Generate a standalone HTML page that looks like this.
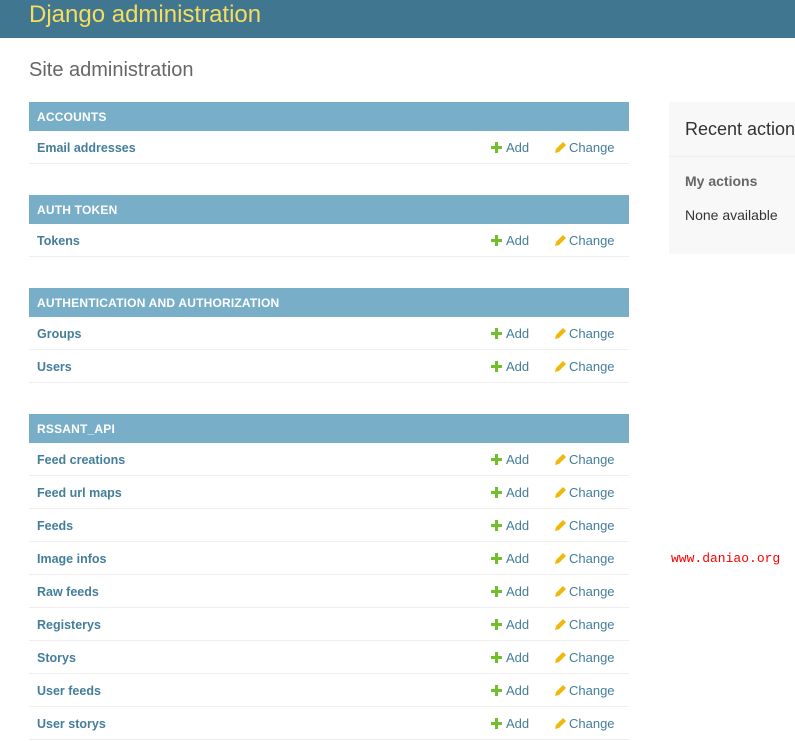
<!DOCTYPE html>
<html><head><meta charset="utf-8"><style>
*{margin:0;padding:0;box-sizing:border-box}
body{width:795px;height:719px;overflow:hidden;background:#fff;font-family:"Liberation Sans",Arial,sans-serif;position:relative;color:#333}
#hd{height:38px;background:#417690;padding-left:29px}
#hd h1{color:#f5dd5d;font-weight:normal;font-size:24px;line-height:30px}
h2.t{position:absolute;left:29px;top:59px;font-size:20px;font-weight:normal;color:#666}
.m{position:absolute;left:29px;width:600px}
.cap{height:29px;background:#79aec8;color:#fff;font-weight:bold;font-size:12px;line-height:30px;padding-left:8px;letter-spacing:.2px}
.r{height:33px;border-bottom:1px solid #eee;position:relative;font-size:13px;line-height:34px;color:#447e9b}
.r b{position:absolute;left:8px;font-size:12.5px}
.a{position:absolute;left:462px}
.c{position:absolute;left:525px}
.a svg,.c svg{position:absolute;top:11px}
.a span,.c span{position:absolute;left:15px;white-space:nowrap}
#ra{position:absolute;left:669px;top:102px;width:140px;height:152px;background:#f8f8f8}
#ra h2{font-size:18px;font-weight:normal;color:#333;position:absolute;left:16px;top:17px;white-space:nowrap}
#ra .ln{position:absolute;top:54px;left:0;right:0;border-top:1px solid #eee}
#ra h3{position:absolute;left:16px;top:71px;font-size:14px;color:#666}
#ra p{position:absolute;left:16px;top:105px;font-size:14px;color:#333;white-space:nowrap}
#wm{position:absolute;left:671px;top:551px;font-family:"Liberation Mono",monospace;font-size:13px;color:#f00}
</style></head><body>
<div id="hd"><h1>Django administration</h1></div>
<h2 class="t">Site administration</h2>

<div class="m" style="top:102px"><div class="cap">ACCOUNTS</div>
<div class="r"><b>Email addresses</b><span class="a"><svg width="11" height="11" viewBox="0 0 11 11"><path d="M4 0h3v4h4v3H7v4H4V7H0V4h4z" fill="#70bf2b"/></svg><span>Add</span></span><span class="c"><svg width="12" height="12" viewBox="0 0 12 12"><path d="M9 0l3 3-7 7-4 1 1-4z" fill="#efb80b"/></svg><span>Change</span></span></div></div>

<div class="m" style="top:195px"><div class="cap">AUTH TOKEN</div>
<div class="r"><b>Tokens</b><span class="a"><svg width="11" height="11" viewBox="0 0 11 11"><path d="M4 0h3v4h4v3H7v4H4V7H0V4h4z" fill="#70bf2b"/></svg><span>Add</span></span><span class="c"><svg width="12" height="12" viewBox="0 0 12 12"><path d="M9 0l3 3-7 7-4 1 1-4z" fill="#efb80b"/></svg><span>Change</span></span></div></div>

<div class="m" style="top:288px"><div class="cap">AUTHENTICATION AND AUTHORIZATION</div>
<div class="r"><b>Groups</b><span class="a"><svg width="11" height="11" viewBox="0 0 11 11"><path d="M4 0h3v4h4v3H7v4H4V7H0V4h4z" fill="#70bf2b"/></svg><span>Add</span></span><span class="c"><svg width="12" height="12" viewBox="0 0 12 12"><path d="M9 0l3 3-7 7-4 1 1-4z" fill="#efb80b"/></svg><span>Change</span></span></div>
<div class="r"><b>Users</b><span class="a"><svg width="11" height="11" viewBox="0 0 11 11"><path d="M4 0h3v4h4v3H7v4H4V7H0V4h4z" fill="#70bf2b"/></svg><span>Add</span></span><span class="c"><svg width="12" height="12" viewBox="0 0 12 12"><path d="M9 0l3 3-7 7-4 1 1-4z" fill="#efb80b"/></svg><span>Change</span></span></div></div>

<div class="m" style="top:414px"><div class="cap">RSSANT_API</div>
<div class="r"><b>Feed creations</b><span class="a"><svg width="11" height="11" viewBox="0 0 11 11"><path d="M4 0h3v4h4v3H7v4H4V7H0V4h4z" fill="#70bf2b"/></svg><span>Add</span></span><span class="c"><svg width="12" height="12" viewBox="0 0 12 12"><path d="M9 0l3 3-7 7-4 1 1-4z" fill="#efb80b"/></svg><span>Change</span></span></div>
<div class="r"><b>Feed url maps</b><span class="a"><svg width="11" height="11" viewBox="0 0 11 11"><path d="M4 0h3v4h4v3H7v4H4V7H0V4h4z" fill="#70bf2b"/></svg><span>Add</span></span><span class="c"><svg width="12" height="12" viewBox="0 0 12 12"><path d="M9 0l3 3-7 7-4 1 1-4z" fill="#efb80b"/></svg><span>Change</span></span></div>
<div class="r"><b>Feeds</b><span class="a"><svg width="11" height="11" viewBox="0 0 11 11"><path d="M4 0h3v4h4v3H7v4H4V7H0V4h4z" fill="#70bf2b"/></svg><span>Add</span></span><span class="c"><svg width="12" height="12" viewBox="0 0 12 12"><path d="M9 0l3 3-7 7-4 1 1-4z" fill="#efb80b"/></svg><span>Change</span></span></div>
<div class="r"><b>Image infos</b><span class="a"><svg width="11" height="11" viewBox="0 0 11 11"><path d="M4 0h3v4h4v3H7v4H4V7H0V4h4z" fill="#70bf2b"/></svg><span>Add</span></span><span class="c"><svg width="12" height="12" viewBox="0 0 12 12"><path d="M9 0l3 3-7 7-4 1 1-4z" fill="#efb80b"/></svg><span>Change</span></span></div>
<div class="r"><b>Raw feeds</b><span class="a"><svg width="11" height="11" viewBox="0 0 11 11"><path d="M4 0h3v4h4v3H7v4H4V7H0V4h4z" fill="#70bf2b"/></svg><span>Add</span></span><span class="c"><svg width="12" height="12" viewBox="0 0 12 12"><path d="M9 0l3 3-7 7-4 1 1-4z" fill="#efb80b"/></svg><span>Change</span></span></div>
<div class="r"><b>Registerys</b><span class="a"><svg width="11" height="11" viewBox="0 0 11 11"><path d="M4 0h3v4h4v3H7v4H4V7H0V4h4z" fill="#70bf2b"/></svg><span>Add</span></span><span class="c"><svg width="12" height="12" viewBox="0 0 12 12"><path d="M9 0l3 3-7 7-4 1 1-4z" fill="#efb80b"/></svg><span>Change</span></span></div>
<div class="r"><b>Storys</b><span class="a"><svg width="11" height="11" viewBox="0 0 11 11"><path d="M4 0h3v4h4v3H7v4H4V7H0V4h4z" fill="#70bf2b"/></svg><span>Add</span></span><span class="c"><svg width="12" height="12" viewBox="0 0 12 12"><path d="M9 0l3 3-7 7-4 1 1-4z" fill="#efb80b"/></svg><span>Change</span></span></div>
<div class="r"><b>User feeds</b><span class="a"><svg width="11" height="11" viewBox="0 0 11 11"><path d="M4 0h3v4h4v3H7v4H4V7H0V4h4z" fill="#70bf2b"/></svg><span>Add</span></span><span class="c"><svg width="12" height="12" viewBox="0 0 12 12"><path d="M9 0l3 3-7 7-4 1 1-4z" fill="#efb80b"/></svg><span>Change</span></span></div>
<div class="r"><b>User storys</b><span class="a"><svg width="11" height="11" viewBox="0 0 11 11"><path d="M4 0h3v4h4v3H7v4H4V7H0V4h4z" fill="#70bf2b"/></svg><span>Add</span></span><span class="c"><svg width="12" height="12" viewBox="0 0 12 12"><path d="M9 0l3 3-7 7-4 1 1-4z" fill="#efb80b"/></svg><span>Change</span></span></div>
</div>

<div id="ra"><h2>Recent actions</h2><div class="ln"></div><h3>My actions</h3><p>None available</p></div>
<div id="wm">www.daniao.org</div>
</body></html>
